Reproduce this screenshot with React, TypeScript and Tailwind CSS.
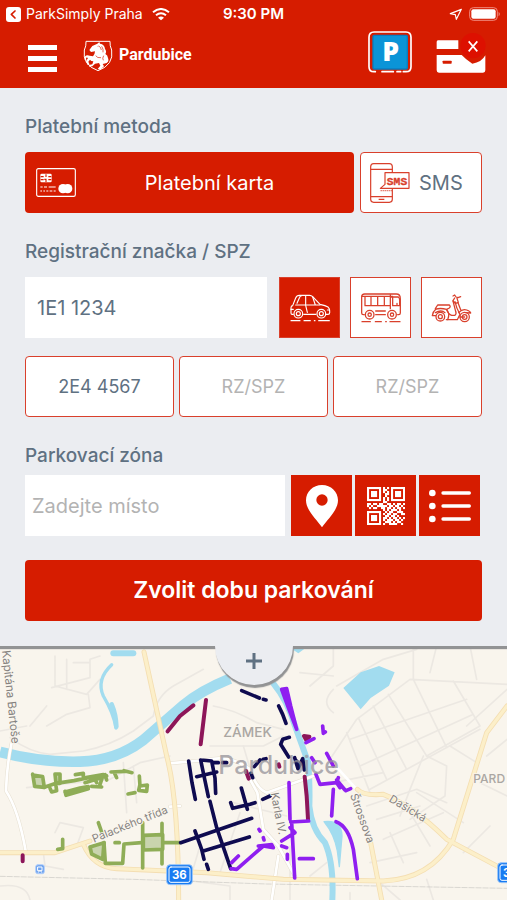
import { useState } from 'react'
import type { ReactNode } from 'react'

type Payment = 'card' | 'sms'
type Vehicle = 'car' | 'bus' | 'scooter'

const QR_ROWS = [
  '1111111010101111111',
  '1000001011001000001',
  '1011101010101011101',
  '1011101001101011101',
  '1011101001001011101',
  '1000001010101000001',
  '1111111010101111111',
  '0000000011000000000',
  '1101101100110101101',
  '1010011111011011010',
  '0101100110110101101',
  '0000000010101110100',
  '1111111001011001110',
  '1000001010110110011',
  '1011101001101101000',
  '1011101011010110101',
  '1011101010111011010',
  '1000001001110101100',
  '1111111010011110010',
]

function CarIcon() {
  return (
    <svg className="w-[42px] h-[32px]" viewBox="109 94 126 96" fill="none" stroke="currentColor" strokeWidth={3.4} strokeLinecap="round" strokeLinejoin="round">
      <path d="M122 161 h-4 q-3 0-3-4 v-16 q0-5 5-6 l9-23 q3-8 11-8 h31 q5 0 9 4 l22 23 q17 3 24 8 q5 4 5 13 v4 q0 5-5 5 h-6" />
      <path d="M153 161 h37 M129 133 h73 M159 105 v29 l5 21 M133 128 l8-18 q2-5 6-5 M180 109 l8 24 M115 146 h7 M224 148 h7" />
      <circle cx="137" cy="159" r="13" />
      <circle cx="137" cy="159" r="6" />
      <circle cx="206" cy="159" r="13" />
      <circle cx="206" cy="159" r="6" />
      <path d="M115 180 h27 M154 180 h19 M185 180 h2 M198 180 h32" />
    </svg>
  )
}

function BusIcon() {
  return (
    <svg className="w-[42px] h-[32px]" viewBox="323 94 126 96" fill="none" stroke="currentColor" strokeWidth={3.8} strokeLinecap="round" strokeLinejoin="round">
      <path d="M336 162 h-3 q-5 0-5-5 v-48 q0-9 9-9 h95 q12 0 12 14 v43 q0 5-5 5 h-3" />
      <path d="M329 107 h92 M338 107 v28 h76 M356 107 v28 M376 107 v28 M396 107 v28 M414 102 v42 M414 109 h24 q4 3 4 9 v17 h-21 v-26 M434 128 v7" />
      <path d="M370 151 h29 M370 162 h29" />
      <circle cx="352" cy="162" r="13" />
      <circle cx="352" cy="162" r="5" />
      <circle cx="419" cy="162" r="13" />
      <circle cx="419" cy="162" r="5" />
      <path d="M329 183 h25 M369 183 h18 M400 183 h2 M413 183 h30" />
    </svg>
  )
}

function ScooterIcon() {
  return (
    <svg className="w-[42px] h-[32px]" viewBox="536 94 126 96" fill="none" stroke="currentColor" strokeWidth={3.8} strokeLinecap="round" strokeLinejoin="round">
      <path d="M549 144 l7-11 h35 q5 5 0 9 l-8 4 q-20-5-34 0z M551 145 q-9 7-11 20 h10 M583 147 q11 11 3 30 M549 156 q18-10 29 0" />
      <path d="M582 177 h33 l8-16 q-11-18-15-38 M583 147 q5 14 15 17 h10 q5-4 2-12 l-8-31" />
      <path d="M602 106 l5-3 4 6 6 2 8-3 M607 112 l-5 8 q2 5 8 8 l8-3 -4-12 M617 126 l8 21 M619 156 q11-12 24-8 q12 4 12 9 l-15-1" />
      <circle cx="564" cy="168" r="13" />
      <circle cx="564" cy="168" r="6" />
      <circle cx="637" cy="169" r="14" />
      <circle cx="637" cy="169" r="7" />
      <path d="M623 169 h14" />
    </svg>
  )
}

function CardIcon() {
  return (
    <svg className="w-10 h-[29px]" viewBox="0 0 120 87" fill="none" stroke="currentColor" strokeWidth={3.4}>
      <rect x="2" y="2" width="116" height="83" rx="5" />
      <rect x="13" y="17" width="34" height="26" rx="4" fill="currentColor" stroke="none" />
      <path d="M14 26 h9 M14 35 h9 M37 26 h9 M37 35 h9 M30 19 v8 M30 42 v-8 h-5" className="stroke-[#d61c00]" />
      <path d="M13 57 h7 M24 57 h9 M38 57 h21 M13 69 h5 M22 69 h5 M31 69 h6 M41 69 h8 M53 69 h6" />
      <circle cx="81" cy="62" r="14" fill="currentColor" stroke="none" />
      <circle cx="95" cy="62" r="14" fill="currentColor" stroke="none" />
    </svg>
  )
}

function SmsIcon() {
  return (
    <svg className="w-10 h-10 text-[#d9402c]" viewBox="0 0 120 120" fill="none" stroke="currentColor" strokeWidth={3.6} strokeLinejoin="round">
      <path d="M67 27 V11 q0-9-9-9 H11 q-9 0-9 9 V109 q0 9 9 9 H58 q9 0 9-9 V78" />
      <path d="M2 19 h65 M2 101 h65 M26 109 h17" />
      <path d="M45 29 H117 V76 H31 l14-12z" fill="white" />
      <path d="M32 83 h35" strokeDasharray="3 3" />
      <text x="81" y="65" textAnchor="middle" fill="currentColor" strokeWidth={1} fontSize="34" fontWeight="700" fontFamily="'Liberation Mono', monospace">SMS</text>
    </svg>
  )
}

function PinIcon() {
  return (
    <svg className="w-[34px] h-[44px]" viewBox="0 0 102 130" fill="currentColor">
      <path fillRule="evenodd" d="M51 2 C24 2 3 22 3 48 C3 78 34 104 51 129 C68 104 99 78 99 48 C99 22 78 2 51 2z M51 30 a17 17 0 1 1 0 34 a17 17 0 1 1 0-34z" />
    </svg>
  )
}

function QrIcon() {
  return (
    <svg className="w-[38px] h-[38px]" viewBox="0 0 19 19" fill="currentColor">
      {QR_ROWS.flatMap((row, y) =>
        row.split('').map((cell, x) => (cell === '1' ? <rect key={`${x}-${y}`} x={x} y={y} width="1.05" height="1.05" /> : null))
      )}
    </svg>
  )
}

function ListIcon() {
  return (
    <svg className="w-[42px] h-[34px]" viewBox="0 0 126 102" fill="currentColor" stroke="currentColor" strokeWidth={10} strokeLinecap="round">
      <g stroke="none">
        <circle cx="10" cy="12" r="10" />
        <circle cx="10" cy="51" r="10" />
        <circle cx="10" cy="90" r="10" />
      </g>
      <path d="M42 12 h79 M42 51 h79 M42 90 h79" />
    </svg>
  )
}

function StatusBar() {
  return (
    <div className="grid grid-cols-[1fr_auto_1fr] items-center h-7 px-[6px] text-sm">
      <div className="flex items-center gap-[5px]">
        <svg className="w-[15px] h-[15px]" viewBox="0 0 45 45" fill="none">
          <rect width="45" height="45" rx="9" fill="white" />
          <path d="M27 12 L16 22 L27 33" stroke="#d61c00" strokeWidth={5} strokeLinecap="round" strokeLinejoin="round" />
        </svg>
        <span>ParkSimply Praha</span>
        <svg className="w-[18px] h-[13px] ml-1" viewBox="0 0 54 39" fill="none" stroke="white" strokeWidth={6}>
          <path d="M3 13 Q27 -7 51 13 M12 22 Q27 9 42 22" />
          <path d="M27 37 L18 29 Q27 22 36 29z" fill="white" stroke="none" />
        </svg>
      </div>
      <span className="text-[15px] font-semibold">9:30 PM</span>
      <div className="flex items-center justify-end gap-[6px]">
        <svg className="w-[14px] h-[13px]" viewBox="0 0 42 39" fill="none" stroke="white" strokeWidth={3.5} strokeLinejoin="round">
          <path d="M37 4 L4 17 L19 20 L22 34z" />
        </svg>
        <svg className="w-8 h-[14px]" viewBox="0 0 96 42" fill="none">
          <rect x="2" y="2" width="83" height="38" rx="11" stroke="#f08a7c" strokeWidth={3} />
          <rect x="7" y="7" width="73" height="28" rx="6" fill="white" />
          <path d="M89 14 q6 7 0 14z" fill="#f4a79d" />
        </svg>
      </div>
    </div>
  )
}

function Header() {
  return (
    <div className="flex items-center h-[60px] pl-7 pr-[21px]">
      <button aria-label="Menu" className="flex flex-col gap-[6px]">
        <span className="w-[29px] h-[5px] bg-white" />
        <span className="w-[29px] h-[5px] bg-white" />
        <span className="w-[29px] h-[5px] bg-white" />
      </button>
      <div className="flex items-center gap-[6px] ml-[26px] pb-1">
        <svg className="w-[30px] h-[32px]" viewBox="0 0 90 96" fill="none">
          <path d="M9 4 H81 Q80 18 86 30 Q93 75 45 92 Q-3 75 4 30 Q10 18 9 4z" stroke="white" strokeWidth={3} />
          <path
            fill="white"
            d="M43 11 l6-5 2 5 q14 2 15 16 q6 7 1 15 q7 3 8 12 q4 10-4 15 l-12 3 4 7 -11 10 -8-2 8-10 -4-8 -12 2 -8 8 -10 1 3-6 7-1 3-9 q-7 0-10-5 l-5 6 4 9 -6 1 -5-11 6-10 q-4-3-6 0 l1 7 -5-2 0-9 q6-7 15-3 l10 2 q6-7 6-15 l-12 2 -5-6 9-12z"
          />
          <path d="M47 18 q7 3 8 12 M56 19 q6 8 4 18 M38 47 q5 8 16 6 M62 47 q-5 8-1 14 M44 19 h2" stroke="#d61c00" strokeWidth={2} />
        </svg>
        <span className="pb-[2px] font-['Roboto',sans-serif] text-base leading-6 font-bold">Pardubice</span>
      </div>
      <button aria-label="Parkování" className="ml-auto pb-3">
        <svg className="w-11 h-[42px]" viewBox="0 0 132 126" fill="none">
          <path d="M22 122 H18 Q3 122 3 107 V19 Q3 3 18 3 H114 Q129 3 129 19 V107 Q129 122 114 122 H106 M42 122 H76 M87 122 H98" stroke="white" strokeWidth={5} strokeLinecap="round" />
          <rect x="13" y="11" width="107" height="105" rx="6" fill="#087ec0" />
          <rect x="17" y="15" width="99" height="97" rx="3" fill="#0b94d7" />
          <text x="68" y="89" textAnchor="middle" fill="white" fontSize="80" fontWeight="800" fontFamily="'Open Sans', sans-serif">P</text>
        </svg>
      </button>
      <button aria-label="Platební karta není přidána" className="ml-6 pb-3">
        <svg className="w-[50px] h-[42px]" viewBox="0 0 150 126" fill="none">
          <path d="M6 28 H67 V54 H2 V33 Q2 28 6 28z" fill="white" />
          <path d="M2 72 H77 Q90 86 109 98 Q137 94 148 73 V118 Q148 125 141 125 H9 Q2 125 2 118z" fill="white" />
          <rect x="20" y="89" width="27" height="9" rx="2" fill="#d61c00" />
          <circle cx="111" cy="44" r="38" fill="#dd1000" />
          <path d="M98 31 L124 61 M124 31 L98 61" stroke="white" strokeWidth={5} />
        </svg>
      </button>
    </div>
  )
}

// Map units are a third of a pixel at the base width
function ZoneMap() {
  return (
    <svg className="block w-full bg-[#f9f5ed]" viewBox="0 0 1521 762" fill="none" strokeLinecap="round" strokeLinejoin="round" fontFamily="Inter, sans-serif" role="img" aria-label="Mapa parkovacích zón Pardubice">
      {/* Minor streets */}
      <g stroke="#ece8e2" strokeWidth={5}>
        <path d="M0 255 L80 240 M30 275 Q90 320 150 325 L250 315 Q330 300 400 255 L460 210 Q470 150 520 120 L610 70" />
        <path d="M165 30 V120 L260 145 L300 100 M155 125 L270 95 V40 L300 30 M200 40 V130 M265 145 L270 185 L200 205 L140 240 M220 50 H270 M90 240 L140 180" />
        <path d="M640 180 Q700 190 770 230 L850 250 M630 300 H790 L850 270 M1000 130 Q960 170 1000 200 M1000 0 V60 L930 120 M900 80 L1000 90" />
        <path d="M990 340 L1070 220 L1230 100 L1521 115 M1040 260 L1110 440 M1075 215 L1160 400 M1120 180 L1220 370 M1165 145 L1280 330 M1240 100 L1340 305 M1000 410 L1150 380 M1050 280 L1400 160 M1080 360 L1420 205 M1110 430 L1440 250 M1360 105 L1440 240 L1280 330" />
        <path d="M1240 0 V100 M1010 120 L1150 40 L1250 10 M1290 80 L1310 0 M1410 0 L1430 100 M1400 240 L1521 130 M1280 330 L1340 360 L1335 450 L1230 520 M1350 300 L1430 350 M1270 330 L1230 430 L1200 510" />
        <path d="M1100 480 L1250 430 L1340 470 M1130 520 L1260 480 M1150 580 L1330 500 M1110 650 L1250 620 M1170 560 L1210 650 M1230 500 L1290 600 M1250 440 L1390 530 M1390 620 L1470 540 M1440 410 L1521 450 M1460 330 L1521 280" />
        <path d="M165 560 L180 530 L250 545 L230 600 M80 425 L330 400 L420 350 L510 330 M370 350 L380 500 M400 360 L410 470 M130 620 L135 660 L190 670 M0 720 Q80 710 90 762 M600 600 L570 700 M720 500 L660 680 M870 600 V762 M540 700 L690 720 V762 M930 690 L980 650 M1050 740 V762 M1140 710 L1200 762 M1280 700 L1300 762 M730 300 L760 400 M700 470 L860 510" />
      </g>
      <g stroke="#c9c7c3" strokeWidth={2}>
        <path d="M0 691 L400 700 L800 714 L1521 727" strokeDasharray="16 5" />
      </g>

      {/* Water */}
      <g stroke="#a2dcef">
        <path d="M0 318 Q120 350 240 347 Q350 344 430 282 L550 178 Q600 135 690 98" strokeWidth={32} strokeLinecap="butt" />
        <path d="M335 56 Q288 100 310 150 Q340 200 348 246" strokeWidth={10} />
        <path d="M335 175 Q348 205 349 242" strokeWidth={14} />
        <path d="M822 115 Q860 160 885 240 L925 350 Q930 430 928 480 Q935 550 975 590 Q1002 650 997 762" strokeWidth={18} />
        <path d="M972 527 Q1025 520 1026 570 L1018 662 L1012 615 Q1003 565 972 527z" fill="#a2dcef" strokeWidth={4} />
        <path d="M340 22 H400" strokeWidth={18} />
      </g>
      <path d="M1030 126 L1082 79 L1137 60 L1184 79 L1167 119 L1112 156 L1082 190z" fill="#a2dcef" />
      <path d="M862 0 H925 L895 22z" fill="#a2dcef" />

      {/* Roads */}
      <g stroke="#e6dfd0" strokeWidth={11}>
        <path d="M35 290 Q20 360 18 435 Q55 490 78 620 M507 352 L620 342 Q690 325 750 370 Q770 430 800 440 L940 390 M750 400 L772 440 L790 550 L835 600 L890 700 M835 630 L815 762 M510 482 L540 480" />
      </g>
      <g stroke="white" strokeWidth={8}>
        <path d="M35 290 Q20 360 18 435 Q55 490 78 620 M507 352 L620 342 Q690 325 750 370 Q770 430 800 440 L940 390 M750 400 L772 440 L790 550 L835 600 L890 700 M835 630 L815 762 M510 482 L540 480 M980 330 L1070 430" />
      </g>
      <g stroke="#f4deb2" strokeWidth={15}>
        <path d="M432 18 Q470 190 500 330 Q535 460 536 762 M0 620 H165 L270 585 M250 595 Q280 665 350 668 L620 680 L850 700 L1150 705 Q1290 700 1360 580 L1410 420 L1460 260 L1521 180 M1072 430 Q1090 450 1150 445 Q1240 480 1340 580 L1500 665 M1110 580 L1145 762" />
      </g>
      <g stroke="#fcefc9" strokeWidth={10}>
        <path d="M432 18 Q470 190 500 330 Q535 460 536 762 M0 620 H165 L270 585 M250 595 Q280 665 350 668 L620 680 L850 700 L1150 705 Q1290 700 1360 580 L1410 420 L1460 260 L1521 180 M1072 430 Q1090 450 1150 445 Q1240 480 1340 580 L1500 665 M1110 580 L1145 762" />
      </g>

      {/* Green zone */}
      <g stroke="#8fad57" strokeWidth={11}>
        <path d="M98 384 L104 421 L133 424 L128 392 L98 387z M165 384 H180 V412 H168z" fill="#c9d4ae" />
        <path d="M133 424 L168 412 L222 404 L250 398 M150 427 L155 438 L170 434 L168 420 M226 386 L250 382 L250 396 M195 436 L198 448 L265 428 M195 438 L240 426 L265 422 M258 395 L310 386 L298 421 M275 421 L305 423 M315 386 L320 402 M333 378 L375 376 M343 380 L350 395 M372 374 L396 380 M255 410 L320 390 M222 404 L280 392 L290 410" />
        <path d="M384 444 L405 440 M418 390 L420 420 L442 417 L440 436 L416 433 L420 415" />
        <path d="M295 530 L305 558 M188 580 V608 L173 610 M312 590 L316 652 H368 L372 594 L425 590 M345 590 H358" />
        <path d="M270 603 L312 590 L308 640 L275 624z M430 568 L488 566 V610 L430 612z" fill="#c9d4ae" />
        <path d="M428 530 V666 M486 532 V568 M486 610 V654 M490 590 H540" />
      </g>

      {/* Resident zone */}
      <g stroke="#0f0b50" strokeWidth={11}>
        <path d="M725 134 L778 156 M790 160 L798 162" />
        <path d="M836 180 L848 205 L858 232 M868 274 L848 280 L842 295 L866 333 M884 335 L894 368 L908 338 L913 372 M890 345 L895 365" />
        <path d="M566 345 L576 410 L586 460 M602 342 L612 390 L625 452 M602 342 L635 345 L645 396 L647 442 M590 392 L650 378 M640 350 H655 M668 350 H680 M763 362 L780 342 M790 340 L798 338 M753 382 L758 395" />
        <path d="M630 466 L650 545 L692 668 M724 426 L742 490 M692 470 L698 487 L750 475 L765 470 M788 460 L810 450 M542 590 L755 517 M610 615 L748 573 M585 555 L605 610 L612 640 M620 655 L625 670" />
      </g>

      {/* Short stay zone */}
      <g stroke="#8d1659" strokeWidth={12}>
        <path d="M503 256 L540 210 L580 178 M618 162 L602 295 M68 628 V646 M738 375 L746 398" />
        <path d="M914 392 L920 450 L924 520 M912 270 L928 272 L920 284z M836 355 L838 362" />
      </g>

      {/* Paid zone */}
      <g stroke="#8f1ff0" strokeWidth={11}>
        <path d="M845 130 L860 128 L872 180 L890 250 L865 185z" fill="#8f1ff0" />
        <path d="M918 290 L942 278 M968 240 L970 262 L976 258 M935 335 L945 350 M980 322 L1000 360 M948 385 L960 415 L1010 410 L1015 395 M1010 410 L1020 425 M1000 430 L995 510 M1010 402 L1035 432 M1038 434 L1052 428" />
        <path d="M867 410 L870 520 M872 528 L926 525 M875 530 L884 696 M870 545 L885 560 L845 585 M1008 527 Q1045 540 1060 610 L1072 698" />
        <path d="M693 668 L710 670 L790 600 L820 605 L815 596 L775 600 M777 550 L780 555 M790 575 L792 582 M695 650 L715 630 M845 600 L860 605 M862 625 V640 M898 638 L940 638" />
      </g>

      {/* Labels */}
      <g fill="#85827f" stroke="#f9f5ed" strokeWidth={5} paintOrder="stroke">
        <text transform="translate(6 14) rotate(84)" fontSize="35">Kapitána Bartoše</text>
        <text transform="translate(282 590) rotate(-22)" fontSize="33">Palackého třída</text>
        <text transform="translate(1165 465) rotate(31)" fontSize="33">Dašická</text>
        <text transform="translate(1050 448) rotate(70)" fontSize="33">Štrossova</text>
        <text transform="translate(812 442) rotate(79)" fontSize="33">Karla IV.</text>
        <g fill="#aaa6a2" fontWeight="500">
          <text x="670" y="272" fontSize="41">ZÁMEK</text>
          <text x="1420" y="411" fontSize="36">PARD</text>
        </g>
        <text x="655" y="384" fontSize="75" fill="#96939a" fillOpacity="0.75" stroke="none" fontWeight="500">Pardubice</text>
      </g>

      {/* Road shields */}
      <g>
        <rect x="500" y="656" width="77" height="60" rx="10" fill="#177bf2" stroke="#9cc6f8" strokeWidth={3} />
        <rect x="507" y="663" width="63" height="46" rx="6" stroke="white" strokeWidth={3} />
        <text x="538" y="698" textAnchor="middle" fill="white" fontSize="34" fontWeight="700">36</text>
        <rect x="1493" y="650" width="77" height="60" rx="10" fill="#177bf2" stroke="#9cc6f8" strokeWidth={3} />
        <rect x="1500" y="657" width="63" height="46" rx="6" stroke="white" strokeWidth={3} />
        <text x="1509" y="692" fill="white" fontSize="34" fontWeight="700">3</text>
        <rect x="107" y="656" width="26" height="27" rx="6" fill="#6da2ef" stroke="#b4d0fa" strokeWidth={3} />
        <path d="M114 663 H126 V674 H114z M115 679 L118 675 M125 679 L122 675" stroke="white" strokeWidth={3} />
      </g>
    </svg>
  )
}

const VEHICLES: { id: Vehicle; label: string; icon: ReactNode }[] = [
  { id: 'car', label: 'Auto', icon: <CarIcon /> },
  { id: 'bus', label: 'Autobus', icon: <BusIcon /> },
  { id: 'scooter', label: 'Motocykl', icon: <ScooterIcon /> },
]

const ZONE_ACTIONS: { label: string; icon: ReactNode }[] = [
  { label: 'Moje poloha', icon: <PinIcon /> },
  { label: 'Načíst QR kód', icon: <QrIcon /> },
  { label: 'Seznam zón', icon: <ListIcon /> },
]

export default function App() {
  const [payment, setPayment] = useState<Payment>('card')
  const [vehicle, setVehicle] = useState<Vehicle>('car')
  const [plate, setPlate] = useState('1E1 1234')
  const [saved, setSaved] = useState(['2E4 4567', '', ''])
  const [place, setPlace] = useState('')

  return (
    <div className="min-h-screen bg-[#f9f5ed] font-['Inter',sans-serif] text-[#5f7182]">
      <header className="bg-[#d61c00] text-white">
        <StatusBar />
        <Header />
      </header>

      <main>
        <form
          onSubmit={e => e.preventDefault()}
          className="relative z-10 bg-[#ebedf1] px-[25px] pt-6 pb-[25px] shadow-[0_3px_1px_#929394]"
        >
          <h2 className="text-[19px] leading-[30px] font-medium mb-[10px]">Platební metoda</h2>
          <div className="flex gap-[6px]">
            <button
              type="button"
              aria-pressed={payment === 'card'}
              onClick={() => setPayment('card')}
              className="flex flex-1 items-center h-[61px] pl-[11px] pr-[51px] rounded-sm bg-[#d61c00] text-white text-xl"
            >
              <CardIcon />
              <span className="flex-1 text-center pl-10">Platební karta</span>
            </button>
            <button
              type="button"
              aria-pressed={payment === 'sms'}
              onClick={() => setPayment('sms')}
              className="flex items-center gap-[9px] w-[122px] h-[61px] pl-[9px] rounded-sm border border-[#d9402c] bg-white text-xl"
            >
              <SmsIcon />
              SMS
            </button>
          </div>

          <label htmlFor="plate" className="block text-[19px] leading-[30px] font-medium mt-6 mb-[10px]">
            Registrační značka / SPZ
          </label>
          <div className="flex gap-[10px]">
            <input
              id="plate"
              value={plate}
              onChange={e => setPlate(e.target.value)}
              className="flex-1 min-w-0 h-[61px] mr-[2px] px-3 bg-white text-xl outline-none"
            />
            {VEHICLES.map(v => (
              <button
                key={v.id}
                type="button"
                aria-label={v.label}
                aria-pressed={vehicle === v.id}
                onClick={() => setVehicle(v.id)}
                className={`flex items-center justify-center w-[61px] h-[61px] border border-[#d9402c] ${
                  vehicle === v.id ? 'bg-[#d61c00] text-white' : 'bg-white text-[#d9402c]'
                }`}
              >
                {v.icon}
              </button>
            ))}
          </div>
          <div className="grid grid-cols-3 gap-[5px] mt-[18px]">
            {saved.map((value, i) => (
              <input
                key={i}
                aria-label={`Uložená značka ${i + 1}`}
                placeholder="RZ/SPZ"
                value={value}
                onChange={e => setSaved(saved.map((s, j) => (j === i ? e.target.value : s)))}
                className="min-w-0 h-[61px] rounded-sm border border-[#d9402c] bg-white text-center text-lg placeholder:text-[#b3b3b3] outline-none"
              />
            ))}
          </div>

          <label htmlFor="place" className="block text-[19px] leading-[30px] font-medium mt-6 mb-1">
            Parkovací zóna
          </label>
          <div className="flex gap-[3px] pr-[2px]">
            <input
              id="place"
              placeholder="Zadejte místo"
              value={place}
              onChange={e => setPlace(e.target.value)}
              className="flex-1 min-w-0 h-[61px] mr-[3px] px-[7px] bg-white text-xl placeholder:text-[#b3b3b3] outline-none"
            />
            {ZONE_ACTIONS.map(a => (
              <button
                key={a.label}
                type="button"
                aria-label={a.label}
                className="flex items-center justify-center w-[61px] h-[61px] bg-[#d61c00] text-white"
              >
                {a.icon}
              </button>
            ))}
          </div>

          <button type="submit" className="block w-full h-[61px] mt-6 rounded-sm bg-[#d61c00] text-white text-[23px] font-semibold">
            Zvolit dobu parkování
          </button>

          {/* Pull tab over the map */}
          <button
            type="button"
            aria-label="Zobrazit více"
            className="absolute top-full left-1/2 -translate-x-1/2 flex justify-center w-[78px] h-[39px] pt-[7px] rounded-b-full bg-[#ebedf1] shadow-[1px_3px_1px_#929394]"
          >
            <svg className="w-4 h-4" viewBox="0 0 16 16" stroke="#5f7182" strokeWidth={3}>
              <path d="M8 0 V16 M0 8 H16" />
            </svg>
          </button>
        </form>

        <ZoneMap />
      </main>
    </div>
  )
}
